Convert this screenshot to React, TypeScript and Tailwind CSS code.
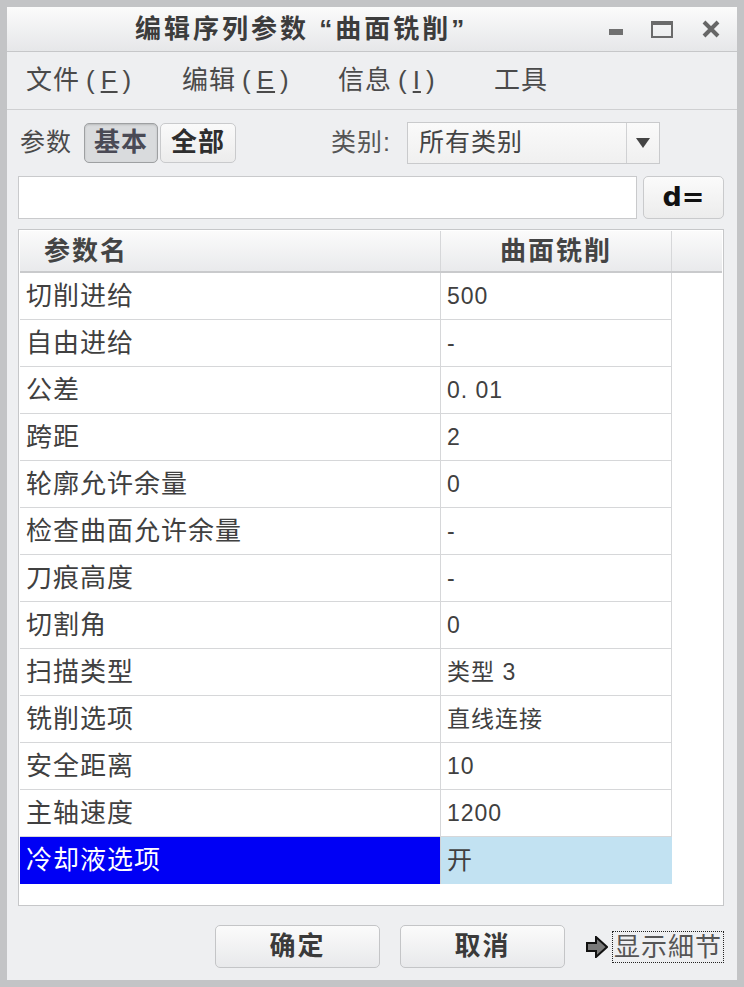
import React from "react";

const rows: [string, string][] = [
  ["切削进给", "500"],
  ["自由进给", "-"],
  ["公差", "0. 01"],
  ["跨距", "2"],
  ["轮廓允许余量", "0"],
  ["检查曲面允许余量", "-"],
  ["刀痕高度", "-"],
  ["切割角", "0"],
  ["扫描类型", "类型 3"],
  ["铣削选项", "直线连接"],
  ["安全距离", "10"],
  ["主轴速度", "1200"],
  ["冷却液选项", "开"],
];

function MenuItem({ label, k }: { label: string; k?: string }) {
  return (
    <span className="w-[156px] shrink-0 text-[26px] tracking-[1px] text-[#4a4a4a]">
      {label}
      {k && (
        <span className="ml-[6px]">
          (<span className="mx-[5px] underline underline-offset-2">{k}</span>)
        </span>
      )}
    </span>
  );
}

export default function App() {
  return (
    <div className="w-[744px] h-[987px] border-[7px] border-[#c3c4c6] bg-[#eeeff1] flex flex-col font-['Liberation_Sans','Noto_Sans_CJK_SC',sans-serif] text-[#404040]">
      {/* title bar */}
      <div className="h-[45px] shrink-0 flex items-center border-b border-[#c6c7c9] bg-gradient-to-b from-[#fbfbfb] to-[#e6e7e9]">
        <div className="ml-[128px] text-[26px] font-bold text-[#3c3c3c] tracking-[3px]">编辑序列参数 “曲面铣削”</div>
        <div className="ml-auto mr-[16px] flex items-center gap-[28px]">
          <div className="w-[14px] h-[6px] bg-[#707070] mt-[6px]" />
          <div className="w-[22px] h-[17px] border-2 border-t-[4px] border-[#6a6a6a]" />
          <svg width="20" height="20" viewBox="0 0 20 20">
            <path d="M3 3 L17 17 M17 3 L3 17" stroke="#666" strokeWidth="4" />
          </svg>
        </div>
      </div>

      {/* menu bar */}
      <div className="h-[58px] shrink-0 flex items-center pl-[19px] border-b border-[#cfd0d2]">
        <MenuItem label="文件" k="F" />
        <MenuItem label="编辑" k="E" />
        <MenuItem label="信息" k="I" />
        <MenuItem label="工具" />
      </div>

      <div className="flex flex-col pl-[11px] pr-[13px] pt-[11px]">
        {/* toolbar */}
        <div className="h-[43px] flex items-center">
          <span className="ml-[2px] text-[25px] tracking-[1px] text-[#4a4a4a]">参数</span>
          <div className="ml-[12px] w-[74px] h-[40px] rounded-[5px] border border-[#9ea0a2] bg-[#d9dbdd] flex items-center justify-center text-[26px] font-bold tracking-[1px] text-[#4a4a55] shadow-[inset_0_1px_2px_rgba(0,0,0,0.15)]">
            基本
          </div>
          <div className="ml-[2px] w-[76px] h-[40px] rounded-[5px] border border-[#c9cacc] bg-gradient-to-b from-[#fafafa] to-[#ececec] flex items-center justify-center text-[26px] font-bold tracking-[1px] text-[#2e2e2e]">
            全部
          </div>
          <span className="ml-[95px] text-[25px] tracking-[1px] text-[#555]">类别:</span>
          <div className="ml-[16px] w-[253px] h-[42px] border border-[#c9cacc] bg-gradient-to-b from-[#fafafa] to-[#f0f0f0] flex">
            <div className="flex-1 flex items-center pl-[11px] text-[25px] tracking-[1px] text-[#444]">所有类别</div>
            <div className="w-[33px] border-l border-[#d0d1d3] flex items-center justify-center">
              <svg width="14" height="10" viewBox="0 0 14 10">
                <path d="M0 0 H14 L7 10 Z" fill="#444" />
              </svg>
            </div>
          </div>
        </div>

        {/* input row */}
        <div className="mt-[12px] h-[43px] flex">
          <div className="w-[619px] h-full bg-white border border-[#c9cacc]" />
          <div className="ml-[6px] flex-1 h-full rounded-[5px] border border-[#c9cacc] bg-gradient-to-b from-[#fbfbfb] to-[#ececec] flex items-center justify-center text-[27px] font-bold text-[#111] font-['DejaVu_Sans',sans-serif]">
            d=
          </div>
        </div>

        {/* table */}
        <div className="mt-[10px] h-[677px] bg-white border border-[#c6c7c9] p-px flex flex-col">
          <div className="h-[42px] shrink-0 grid grid-cols-[421px_231px_1fr] border-b-2 border-[#c9cacc] bg-gradient-to-b from-[#fbfbfb] to-[#e9eaec]">
            <div className="pl-[24px] flex items-center text-[26px] font-bold tracking-[2px] text-[#444] border-r border-[#d6d7d9]">参数名</div>
            <div className="flex items-center justify-center text-[26px] font-bold tracking-[2px] text-[#444] border-r border-[#d6d7d9]">曲面铣削</div>
            <div />
          </div>
          {rows.map(([name, val], i) => {
            const sel = i === rows.length - 1;
            return (
              <div key={name} className="h-[47px] shrink-0 grid grid-cols-[421px_231px_1fr]">
                <div
                  className={
                    sel
                      ? "pl-[6px] flex items-center text-[26px] tracking-[1px] bg-[#0000f5] text-white border-r border-[#d0d1d3]"
                      : "pl-[6px] flex items-center text-[26px] tracking-[1px] border-r border-b border-[#d6d7d9]"
                  }
                >
                  {name}
                </div>
                <div
                  className={
                    sel
                      ? "pl-[6px] flex items-center text-[25px] tracking-[1px] bg-[#c2e2f2]"
                      : "pl-[6px] flex items-center text-[23px] tracking-[1px] border-r border-b border-[#d6d7d9]"
                  }
                >
                  {val}
                </div>
                <div />
              </div>
            );
          })}
        </div>

        {/* buttons */}
        <div className="mt-[19px] h-[43px] flex items-center">
          <div className="ml-[197px] w-[165px] h-[43px] rounded-[5px] border border-[#c4c5c7] bg-gradient-to-b from-[#fbfbfb] to-[#e8e9eb] flex items-center justify-center text-[26px] font-bold tracking-[2px] text-[#3a3a3a]">
            确定
          </div>
          <div className="ml-[20px] w-[165px] h-[43px] rounded-[5px] border border-[#c4c5c7] bg-gradient-to-b from-[#fbfbfb] to-[#e8e9eb] flex items-center justify-center text-[26px] font-bold tracking-[2px] text-[#3a3a3a]">
            取消
          </div>
          <svg className="ml-[21px]" width="22" height="22" viewBox="0 0 22 22">
            <path d="M1 7 H10 V1 L21 11 L10 21 V15 H1 Z" fill="#7a7a7a" stroke="#111" strokeWidth="2" strokeLinejoin="miter" />
          </svg>
          <div className="ml-[4px] border border-dotted border-[#222] px-[1px] text-[26px] tracking-[1px] leading-[30px] text-[#555]">显示細节</div>
        </div>
      </div>
    </div>
  );
}
